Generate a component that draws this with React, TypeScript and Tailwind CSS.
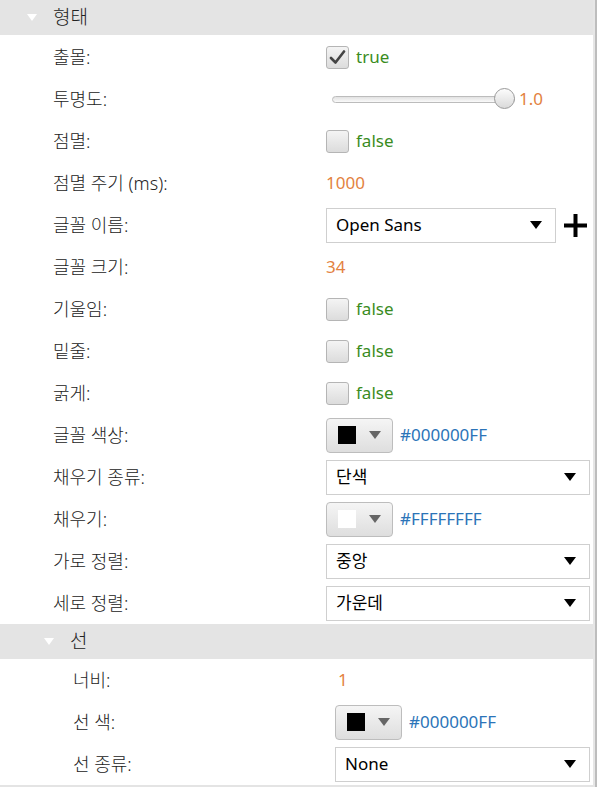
import React from 'react';

const font = { fontFamily: '"Noto Sans", "Noto Sans CJK KR", sans-serif' };

const Caret = ({ className = '' }: { className?: string }) => (
  <svg width="12" height="8" viewBox="0 0 12 8" className={className}>
    <path d="M0 0 L12 0 L6 8 Z" fill="currentColor" />
  </svg>
);

const Header = ({ title, indent }: { title: string; indent: 'top' | 'sub' }) => (
  <div className={`flex items-center h-[35px] bg-[#e4e4e4] ${indent === 'top' ? 'pl-[27px]' : 'pl-[44px]'}`}>
    <svg width="10" height="7" viewBox="0 0 10 7" className="mr-[16px]">
      <path d="M0 0 L10 0 L5 7 Z" fill="#ffffff" />
    </svg>
    <span className="text-[19px] text-[#222] font-light">{title}</span>
  </div>
);

const Row = ({ label, sub, children }: { label: string; sub?: boolean; children: React.ReactNode }) => (
  <div className={`flex items-center h-[42px] ${sub ? 'pl-[73px]' : 'pl-[53px]'}`}>
    <div className={`${sub ? 'w-[262px]' : 'w-[273px]'} text-[18px] text-[#222] font-light shrink-0`}>{label}</div>
    <div className="flex items-center flex-1 pr-[3px]">{children}</div>
  </div>
);

const Check = ({ on }: { on: boolean }) => (
  <div className="flex items-center gap-[7px]">
    <div className="w-[23px] h-[23px] rounded-[3px] border border-[#b5b5b5] bg-gradient-to-b from-[#f4f4f4] to-[#dcdcdc] flex items-center justify-center">
      {on && (
        <svg width="17" height="15" viewBox="0 0 17 15">
          <path d="M2 8 L6.5 12.5 L15 1.5" stroke="#444" strokeWidth="2.6" fill="none" strokeLinecap="round" strokeLinejoin="round" />
        </svg>
      )}
    </div>
    <span className="text-[17px] text-[#3a8c1e]">{on ? 'true' : 'false'}</span>
  </div>
);

const Select = ({ value, className = '' }: { value: string; className?: string }) => (
  <div className={`h-[35px] border border-[#cfcfcf] bg-white flex items-center justify-between pl-[9px] pr-[13px] ${className}`}>
    <span className="text-[17px] text-black">{value}</span>
    <Caret className="text-black" />
  </div>
);

const ColorPick = ({ color, hex }: { color: string; hex: string }) => (
  <div className="flex items-center gap-[7px]">
    <div className="w-[67px] h-[35px] rounded-[4px] border border-[#bdbdbd] bg-gradient-to-b from-[#f5f5f5] to-[#dedede] flex items-center pl-[11px] gap-[13px]">
      <div className="w-[18px] h-[18px]" style={{ background: color }} />
      <Caret className="text-[#666]" />
    </div>
    <span className="text-[17px] text-[#2b74b8]">{hex}</span>
  </div>
);

const Num = ({ v }: { v: string }) => <span className="text-[17px] text-[#e3823f]">{v}</span>;

export default function App() {
  return (
    <div className="w-[598px] h-[787px] bg-white flex overflow-hidden" style={font}>
      <div className="w-[593px] flex flex-col">
        <Header title="형태" indent="top" />
        <div className="h-[1px]" />
        <Row label="출몰:"><Check on /></Row>
        <Row label="투명도:">
          <div className="flex items-center">
            <div className="relative w-[183px] h-[22px] flex items-center ml-[6px]">
              <div className="w-full h-[7px] rounded-full border border-[#bcbcbc] bg-gradient-to-b from-[#e2e2e2] to-[#fafafa]" />
              <div className="absolute right-0 top-0 w-[21px] h-[21px] rounded-full border border-[#9a9a9a] bg-gradient-to-b from-[#fcfcfc] to-[#dadada]" />
            </div>
            <span className="ml-[4px]"><Num v="1.0" /></span>
          </div>
        </Row>
        <Row label="점멸:"><Check on={false} /></Row>
        <Row label="점멸 주기 (ms):"><Num v="1000" /></Row>
        <Row label="글꼴 이름:">
          <Select value="Open Sans" className="w-[230px]" />
          <svg width="25" height="25" viewBox="0 0 25 25" className="ml-[7px]">
            <path d="M12.5 1 V24 M1 12.5 H24" stroke="#000" strokeWidth="4" />
          </svg>
        </Row>
        <Row label="글꼴 크기:"><Num v="34" /></Row>
        <Row label="기울임:"><Check on={false} /></Row>
        <Row label="밑줄:"><Check on={false} /></Row>
        <Row label="굵게:"><Check on={false} /></Row>
        <Row label="글꼴 색상:"><ColorPick color="#000" hex="#000000FF" /></Row>
        <Row label="채우기 종류:"><Select value="단색" className="flex-1" /></Row>
        <Row label="채우기:"><ColorPick color="#fff" hex="#FFFFFFFF" /></Row>
        <Row label="가로 정렬:"><Select value="중앙" className="flex-1" /></Row>
        <Row label="세로 정렬:"><Select value="가운데" className="flex-1" /></Row>
        <Header title="선" indent="sub" />
        <Row label="너비:" sub><span className="ml-[3px]"><Num v="1" /></span></Row>
        <Row label="선 색:" sub><ColorPick color="#000" hex="#000000FF" /></Row>
        <Row label="선 종류:" sub><Select value="None" className="flex-1" /></Row>
        <div className="flex-1 bg-[#e4e4e4]" />
      </div>
      <div className="w-[2px] bg-[#e6e6e6]" />
      <div className="w-[2px] bg-[#bdbdbd]" />
      <div className="w-[1px] bg-white" />
    </div>
  );
}
